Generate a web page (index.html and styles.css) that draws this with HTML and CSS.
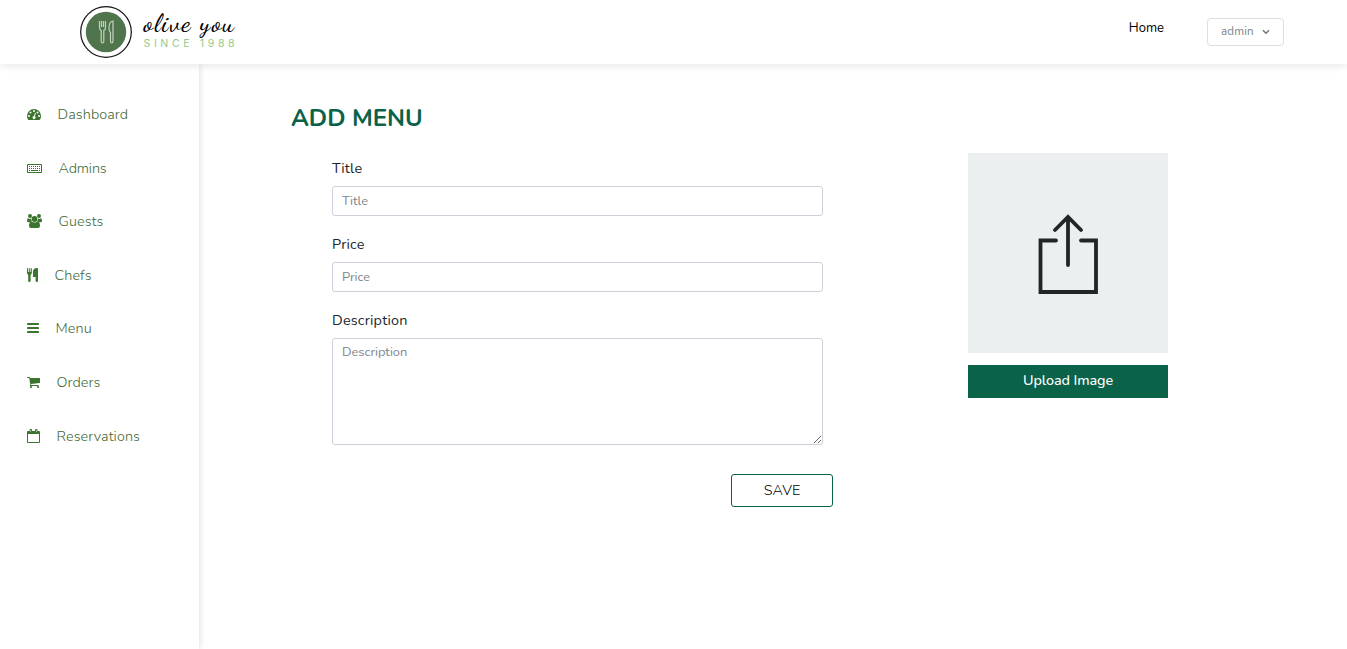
FILE: index.html
```html
<!DOCTYPE html>
<html lang="en">
<head>
<meta charset="utf-8">
<title>Add Menu</title>
<link rel="stylesheet" href="styles.css">
</head>
<body>
<header class="topbar">
  <a class="brand">
    <svg class="brand-mark" width="52" height="52" viewBox="0 0 52 52" fill="none">
      <circle cx="26" cy="26" r="25.3" stroke="#111" stroke-width="1.2"/>
      <circle cx="26" cy="26" r="20.2" fill="#50744b"/>
      <g stroke="#c3d2bf" stroke-width="1.200">
        <path d="M19.500 15v6.500q0 2 1.700 3v11q0 1.500 1.300 1.500t1.300-1.500v-11q1.700-1 1.700-3V15M21.500 15v6M23.500 15v6"/>
        <path d="M33 15q-4 .5-4 7.500 .2 3 1.500 4v8.500q0 2 1.200 2t1.300-2z"/>
      </g>
    </svg>
    <span class="brand-text"><span class="brand-name">olive you</span><span class="brand-since">SINCE 1988</span></span>
  </a>
  <nav class="top-links">
    <a class="home">Home</a>
    <button class="user">admin<svg width="8" height="6" viewBox="0 0 8 6" fill="none" stroke="#6b7280" stroke-width="1.4"><path d="M1 1.200l3 3 3-3"/></svg></button>
  </nav>
</header>
<div class="shell">
  <aside class="sidebar">
    <a class="item"><svg width="14" height="14" viewBox="0 0 14 14"><path fill="currentColor" fill-rule="evenodd" d="M7 2a7 7 0 0 1 7 7q0 2-1 3.600-.2.400-.6.400H1.600q-.4 0-.6-.4Q0 11 0 9a7 7 0 0 1 7-7zM2 8a1 1 0 1 0 0 2 1 1 0 0 0 0-2zM3.500 4.500a1 1 0 1 0 0 2 1 1 0 0 0 0-2zM7 3a1 1 0 1 0 0 2 1 1 0 0 0 0-2zM10.500 4.500a1 1 0 1 0 0 2 1 1 0 0 0 0-2zM12 8a1 1 0 1 0 0 2 1 1 0 0 0 0-2zM7.900 5.700l-.8 3.300a1.500 1.500 0 1 0 .9.300l.8-3.300z"/></svg><span>Dashboard</span></a>
    <a class="item"><svg width="15" height="14" viewBox="0 0 15 14" fill="none" stroke="currentColor"><path d="M.5 3.500h14v8H.5z"/><path stroke-dasharray="1 1" d="M2 5.500h11M2 7.500h11"/><path d="M2 9.500h1M4 9.500h7M12 9.500h1"/></svg><span class="tight">Admins</span></a>
    <a class="item"><svg width="15" height="14" viewBox="0 0 15 14" fill="currentColor"><circle cx="3" cy="2" r="2"/><circle cx="12" cy="2" r="2"/><circle cx="7.500" cy="5" r="2.900"/><path d="M1 4.300q2 1 3 .3 0 1.700 1 2.700-1.200 0-2 1H1.500Q0 8.300 0 7q0-2.500 1-2.700zM14 4.300q-2 1-3 .3 0 1.700-1 2.700 1.200 0 2 1h1.500Q15 8.300 15 7q0-2.500-1-2.700zM4.300 7.400q3.200 2 6.400 0 2.300.8 2.300 4.400 0 2.200-2 2.200H4q-2 0-2-2.200 0-3.600 2.300-4.400z"/></svg><span>Guests</span></a>
    <a class="item"><svg width="11" height="14" viewBox="0 0 11 14" fill="currentColor"><path d="M0 .5q.5-1 1 0V4h.8V.5q.5-1 1 0V4h.8V.5q.6-1 1.200 0V5q0 1.200-1.200 1.700V13q0 1-1.200 1t-1.200-1V6.700Q0 6.200 0 5zM11 .5V13q0 1-1.200 1t-1.200-1V9H6V3Q6.500 0 10 0q1 0 1 .5z"/></svg><span>Chefs</span></a>
    <a class="item"><svg width="12" height="14" viewBox="0 0 12 14" fill="currentColor"><rect y="2" width="12" height="2" rx=".4"/><rect y="6" width="12" height="2" rx=".4"/><rect y="10" width="12" height="2" rx=".4"/></svg><span>Menu</span></a>
    <a class="item"><svg width="13" height="14" viewBox="0 0 13 14" fill="currentColor"><path d="M0 2.500Q0 2 .5 2h2q.5 0 .6 1H12.500q.5 0 .5.500v4q0 .5-.5.500L4 9l.2 1H11.500v1h-8q-.7 0-.5-.6l.3-.8L2.200 3H.5Q0 3 0 2.500z"/><circle cx="4" cy="12" r="1.100"/><circle cx="11" cy="12" r="1.100"/></svg><span>Orders</span></a>
    <a class="item"><svg width="13" height="14" viewBox="0 0 13 14" fill="none" stroke="currentColor"><path d="M.5 2.500h12v11H.5z"/><path stroke-width="2" d="M1 4h11"/><path fill="#fff" d="M3 .5h1.500v3H3zM8.500 .5H10v3H8.500z"/></svg><span>Reservations</span></a>
  </aside>
  <main class="content">
    <h1 class="title">ADD MENU</h1>
    <div class="columns">
      <form class="form">
        <label class="label">Title</label>
        <input class="field" placeholder="Title">
        <label class="label">Price</label>
        <input class="field" placeholder="Price">
        <label class="label">Description</label>
        <textarea class="field area" placeholder="Description"></textarea>
        <button class="save" type="button">SAVE</button>
      </form>
      <div class="upload">
        <div class="preview">
          <svg width="200" height="200" viewBox="0 0 200 200" fill="none" stroke="#222527" stroke-width="3.800" stroke-linecap="round"><path d="M88 87.500H72.500v51.500h55.500V87.500H113M100 112V64M87 77l13-13 13 13"/></svg>
        </div>
        <button class="upload-btn" type="button">Upload Image</button>
      </div>
    </div>
  </main>
</div>
</body>
</html>
```
FILE: styles.css
```css
* { box-sizing: border-box; }
body { margin: 0; height: 649px; overflow: hidden; display: flex; flex-direction: column; background: #fff; color: #212529; font-family: Nunito, Lato, sans-serif; }
button, input, textarea { font-family: inherit; margin: 0; }
.topbar { flex: none; height: 64px; padding: 0 63px 0 80px; display: flex; justify-content: space-between; background: #fff; box-shadow: 0 0 10px rgba(0,0,0,.14); z-index: 2; }
.brand { display: flex; align-items: flex-start; padding-top: 6px; gap: 11.500px; }
.brand-mark { display: block; }
.brand-text { display: flex; flex-direction: column; }
.brand-name { height: 31px; font: 500 26px/34px "Dancing Script", "Liberation Serif", serif; color: #000; white-space: nowrap; letter-spacing: 1.400px; }
.brand-since { font: 10.500px/13px Inter, sans-serif; letter-spacing: 3.650px; color: #93cc88; white-space: nowrap; }
.top-links { display: flex; align-items: flex-start; gap: 43px; padding-top: 18px; }
.home { font: 13px/20px Nunito, sans-serif; color: #000; }
.user { width: 77px; height: 28px; display: flex; align-items: center; gap: 8px; padding: 0 0 2px 13px; border: 1px solid #dcdfe3; border-radius: 4px; background: #fff; color: #7b828a; font: 11.500px Nunito, sans-serif; letter-spacing: .2px; }
.user svg { margin-top: 2px; }
.shell { flex: 1; display: flex; min-height: 0; }
.sidebar { flex: none; width: 199px; padding: 23.100px 0 0 27px; box-shadow: 0 0 7px rgba(0,0,0,.16); }
.item { height: 53.620px; display: flex; align-items: center; gap: 16.500px; color: #3a742f; font-size: 14.400px; font-weight: 300; }
.item span { color: #3f6937; letter-spacing: .1px; }
.item .tight { letter-spacing: -.15px; }
.content { flex: 1; padding: 36px 0 0 92px; }
.title { margin: 0; height: 36px; font-size: 24px; line-height: 37px; font-weight: 700; color: #0a6249; }
.columns { display: flex; align-items: flex-start; justify-content: space-between; padding: 17px 179px 0 41px; }
.form { width: 501px; display: flex; flex-direction: column; padding-top: 3px; }
.label { height: 24px; margin-bottom: 6px; font-size: 14.400px; line-height: 25px; letter-spacing: .2px; }
.field { display: block; width: 491px; height: 30px; margin-bottom: 16px; padding: 4px 9px; border: 1px solid #ced1da; border-radius: 3px; background: #fff; font-size: 12.800px; line-height: 19px; }
.field::placeholder { color: #7c858d; opacity: 1; }
.area { height: 107px; margin-bottom: 29px; resize: vertical; }
.save { align-self: flex-end; width: 102px; height: 33px; padding: 0 0 2px; border: 1px solid #0a6249; border-radius: 3px; background: #fff; color: #000; font-size: 14.400px; font-weight: 300; }
.upload { width: 200px; display: flex; flex-direction: column; gap: 12px; }
.preview { height: 200px; background: #ebeff0; }
.preview svg { display: block; }
.upload-btn { height: 33px; padding: 0 0 3px; border: 0; background: #0a6249; color: #fff; font-size: 14.400px; font-weight: 500; letter-spacing: -.1px; }
```
